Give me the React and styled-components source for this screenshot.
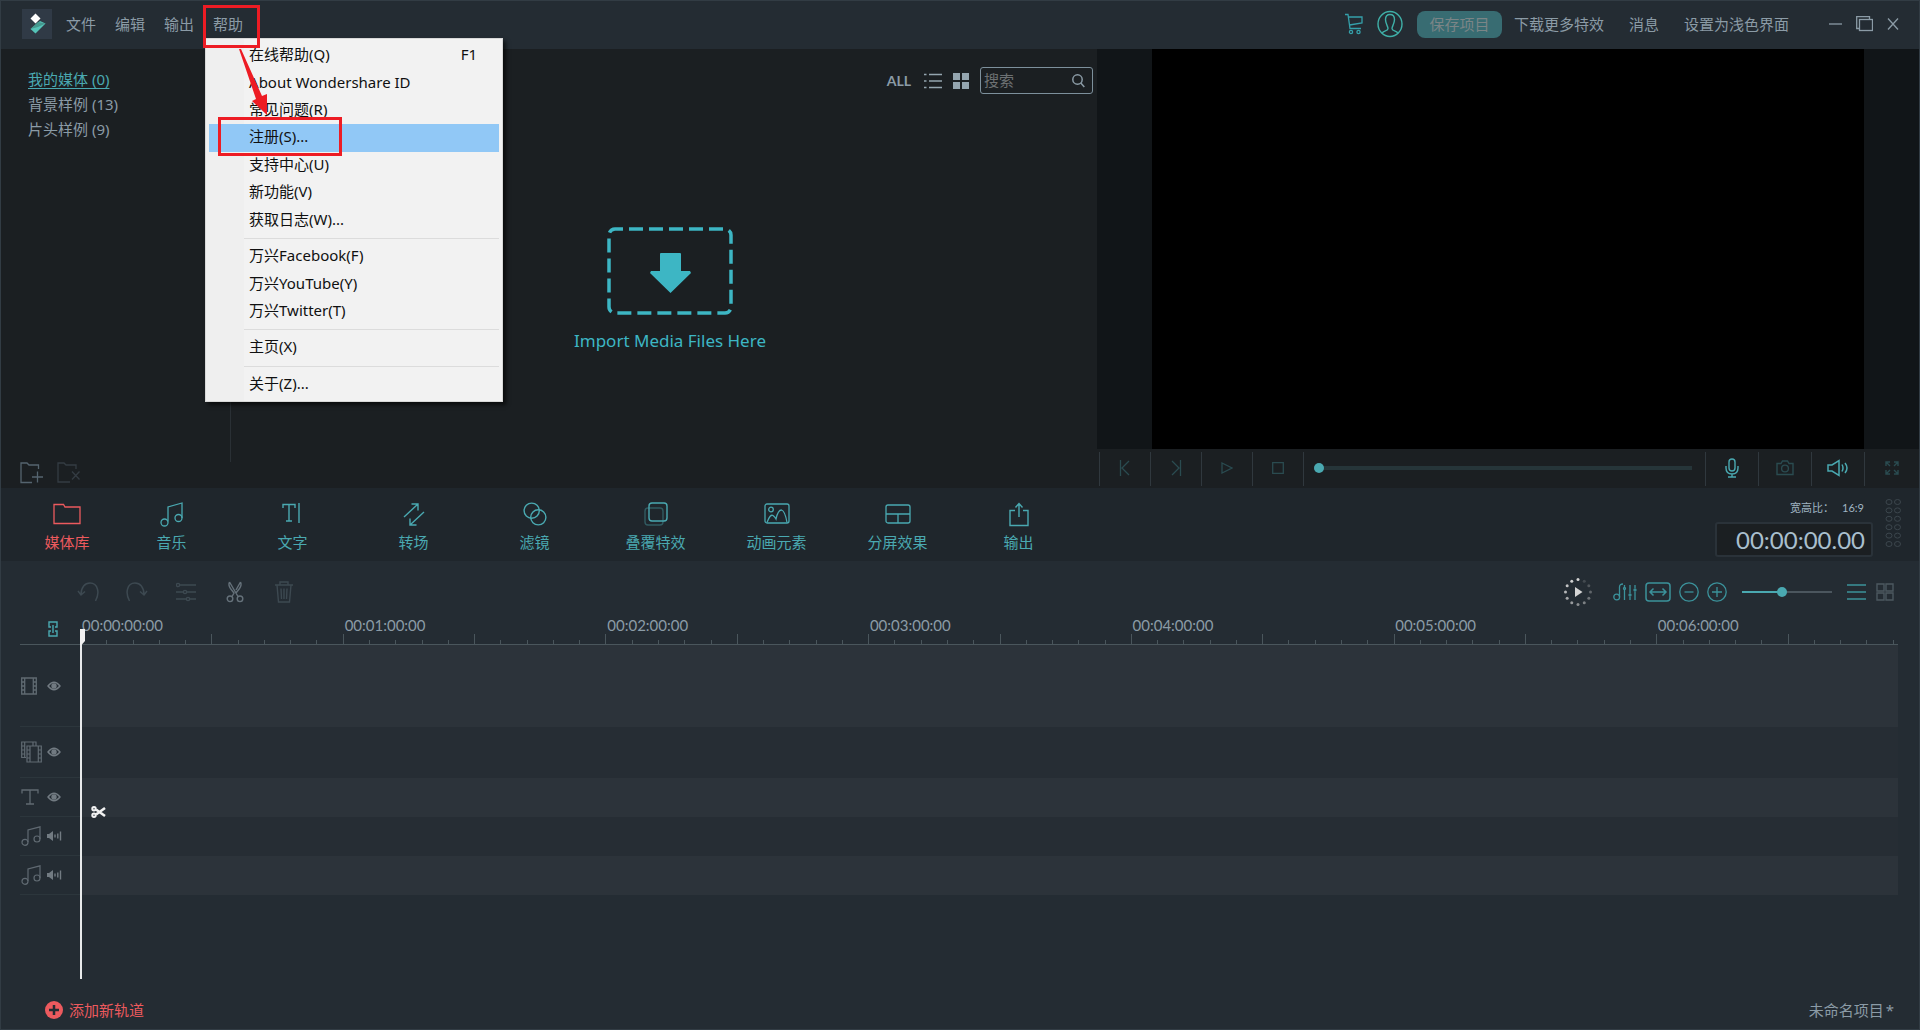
import React from "react";
import styled, { createGlobalStyle, css } from "styled-components";

const color = {
  bar: "#242c33",
  nav: "#1f262c",
  panel: "#1b1f22",
  stage: "#111518",
  line: "#30383e",
  text: "#8b9ba6",
  teal: "#4aa9b1",
  dimTeal: "#2a4b50",
  red: "#ec5a5e",
  mark: "#ed1c24",
};

const uiFont = `"Noto Sans", "Noto Sans CJK SC", sans-serif`;
const numberFont = `Lato, "Noto Sans CJK SC", sans-serif`;

const GlobalStyle = createGlobalStyle`
  *, *::before, *::after { box-sizing: border-box; }
  body { margin: 0; background: ${color.bar}; font: 15px/20px ${uiFont}; color: ${color.text}; }
  button, input { font: inherit; color: inherit; }
  button { border: 0; padding: 0; background: none; white-space: nowrap; }
  ul { margin: 0; padding: 0; list-style: none; }
  a { color: inherit; text-decoration: none; }
  svg { display: block; flex: none; }
`;

const Window = styled.div`
  min-height: 100vh;
  display: flex;
  flex-direction: column;
  border: 1px solid #323c44;
  background: ${color.bar};
`;

const Glyph = styled.svg`
  fill: none;
  stroke: currentColor;
  stroke-width: ${(p) => p.$weight || 1};
`;

function Icon({ w, h, weight, children }) {
  return (
    <Glyph width={w} height={h} viewBox={`0 0 ${w} ${h}`} $weight={weight} aria-hidden="true">
      {children}
    </Glyph>
  );
}

/* ---------- title bar ---------- */

const TitleBar = styled.header`
  display: flex;
  align-items: center;
  height: 48px;
  padding: 0 20px 2px 21px;
  background: ${color.bar};
`;

const MenuBar = styled.nav`
  display: flex;
  align-self: stretch;
  gap: 19px;
  margin-left: 14px;
`;

const MenuSlot = styled.div`
  position: relative;
  display: flex;
  align-items: center;
`;

const Dropdown = styled.ul`
  position: absolute;
  z-index: 2;
  top: 37px;
  left: -8px;
  width: 298px;
  height: 364px;
  padding: 3px;
  display: flex;
  flex-direction: column;
  border: 1px solid #d8d8d8;
  background: linear-gradient(to right, #efefef 38px, #f2f2f2 38px);
  box-shadow: 3px 3px 4px rgba(0, 0, 0, 0.6);
  color: #101010;
`;

const DropdownRow = styled.li`
  position: relative;
  flex: 1;
  display: flex;
  background: ${(p) => (p.$active ? "#91c8f6" : "transparent")};
`;

const DropdownButton = styled.button`
  flex: 1;
  display: flex;
  align-items: center;
  justify-content: space-between;
  padding: 0 22px 3px 40px;
`;

const DropdownRule = styled.li`
  height: 9px;
  padding: 4px 0;
  margin-left: 35px;
  background: #dcdcdc content-box;
`;

const MarkBox = styled.span`
  position: absolute;
  z-index: 3;
  top: ${(p) => p.$top}px;
  left: ${(p) => p.$left}px;
  width: ${(p) => p.$width}px;
  height: ${(p) => p.$height}px;
  border: 3px solid ${color.mark};
  pointer-events: none;
`;

const MarkArrow = styled.svg`
  position: absolute;
  z-index: 3;
  top: 47px;
  left: 25px;
`;

const TitleTools = styled.div`
  display: flex;
  align-items: center;
  gap: ${(p) => p.$gap}px;
  margin-left: ${(p) => p.$lead || "0"};
`;

const IconButton = styled.button`
  display: flex;
  align-items: center;
  justify-content: center;
  color: ${(p) => p.$color || color.text};
`;

const SaveButton = styled.button`
  width: 85px;
  height: 27px;
  border-radius: 8px;
  background: #386c72;
  color: #7b8587;
`;

const menuGroups = [
  ["在线帮助(Q)", "About Wondershare ID", "常见问题(R)", "注册(S)...", "支持中心(U)", "新功能(V)", "获取日志(W)..."],
  ["万兴Facebook(F)", "万兴YouTube(Y)", "万兴Twitter(T)"],
  ["主页(X)"],
  ["关于(Z)..."],
];

function HelpMenu() {
  return (
    <MenuSlot>
      <button>帮助</button>
      <Dropdown>
        {menuGroups.map((group, g) => (
          <React.Fragment key={g}>
            {g > 0 && <DropdownRule />}
            {group.map((label) => (
              <DropdownRow key={label} $active={label.startsWith("注册")}>
                <DropdownButton>
                  <span>{label}</span>
                  {label.startsWith("在线") && <span>F1</span>}
                </DropdownButton>
                {label.startsWith("注册") && <MarkBox $top={-7} $left={9} $width={124} $height={39} />}
              </DropdownRow>
            ))}
          </React.Fragment>
        ))}
      </Dropdown>
      <MarkBox $top={4} $left={-10} $width={57} $height={43} />
      <MarkArrow width="34" height="70" viewBox="0 0 34 70" aria-hidden="true">
        <path d="M1 1 L3 1 L24 48 L29 46 L29 67 L14 53 L18 51 Z" fill={color.mark} />
      </MarkArrow>
    </MenuSlot>
  );
}

function Header() {
  return (
    <TitleBar>
      <svg width="30" height="30" viewBox="0 0 30 30" aria-hidden="true">
        <rect width="30" height="30" fill="#303a46" />
        <path d="M13.500 4.500 L18.500 9.500 L13.500 14.500 L8.500 9.500 Z" fill="#fff" />
        <path d="M18 12 L23.500 14.500 L13.500 24.500 L8.500 20 Z" fill="#55c3b8" />
        <path d="M8.500 20 L16 13 L23.500 14.500 L16 18 Z" fill="#45988f" />
      </svg>
      <MenuBar>
        {["文件", "编辑", "输出"].map((m) => (
          <MenuSlot key={m}>
            <button>{m}</button>
          </MenuSlot>
        ))}
        <HelpMenu />
      </MenuBar>
      <TitleTools $gap={14} $lead="auto">
        <IconButton aria-label="购物车" $color="#35a0aa">
          <Icon w={18} h={22} weight={1.3}>
            <path d="M0 1.500H3L5 15.500H16M3.500 4H17V10L4.500 12" />
            <circle cx="6" cy="19" r="1.600" />
            <circle cx="13.500" cy="19" r="1.600" />
          </Icon>
        </IconButton>
        <IconButton aria-label="账户" $color="#3fb0a8">
          <Icon w={26} h={28} weight={1.4}>
            <ellipse cx="13" cy="14" rx="12" ry="12.500" />
            <path d="M5 23.500C6 20 11 21.500 11 18.500C11 16 8.500 14 8.500 9.500C8.500 6 10.500 4.500 13 4.500S17.500 6 17.500 9.500C17.500 14 15 16 15 18.500C15 21.500 20 20 21 23.500" />
          </Icon>
        </IconButton>
        <SaveButton>保存项目</SaveButton>
      </TitleTools>
      <TitleTools $gap={25} $lead="12px">
        <a href="#effects">下载更多特效</a>
        <a href="#messages">消息</a>
        <button>设置为浅色界面</button>
      </TitleTools>
      <TitleTools $gap={14} $lead="40px">
        <IconButton aria-label="最小化">
          <Icon w={13} h={16} weight={1.3}><path d="M0 8H13" /></Icon>
        </IconButton>
        <IconButton aria-label="还原">
          <Icon w={17} h={16} weight={1.3}>
            <rect x="3.500" y="3.500" width="13" height="11" />
            <path d="M3.500 12.500H.7V.7H13.500V3.500" />
          </Icon>
        </IconButton>
        <IconButton aria-label="关闭">
          <Icon w={12} h={14} weight={1.3}><path d="M1 1.500L11 12.500M11 1.500L1 12.500" /></Icon>
        </IconButton>
      </TitleTools>
    </TitleBar>
  );
}

/* ---------- media panel ---------- */

const Workspace = styled.main`
  display: grid;
  grid-template-columns: minmax(0, 4fr) minmax(0, 3fr);
  height: 439px;
`;

const MediaPanel = styled.section`
  display: flex;
  flex-direction: column;
  background: ${color.panel};
`;

const MediaBody = styled.div`
  flex: 1;
  display: flex;
`;

const Library = styled.ul`
  width: 230px;
  padding: 18px 0 0 27px;
  border-right: 1px solid #2a3035;
`;

const LibraryLink = styled.a`
  line-height: 25px;
  ${(p) =>
    p.$active &&
    css`
      color: ${color.teal};
      text-decoration: underline;
      text-underline-offset: 3px;
    `}
`;

const LibraryActions = styled.div`
  display: flex;
  align-items: flex-start;
  gap: 14px;
  height: 26px;
  padding-left: 19px;
`;

const Browser = styled.div`
  flex: 1;
  display: flex;
  flex-direction: column;
`;

const BrowserBar = styled.div`
  display: flex;
  align-items: center;
  justify-content: flex-end;
  gap: 11px;
  padding: 18px 4px 0 0;
`;

const FilterButton = styled.button`
  padding-right: 2px;
  font: 700 14px/20px ${numberFont};
`;

const SearchBox = styled.label`
  display: flex;
  align-items: center;
  width: 113px;
  height: 27px;
  padding: 0 7px 0 3px;
  border: 1px solid #7d909c;
  border-radius: 3px;
`;

const SearchInput = styled.input`
  flex: 1;
  min-width: 0;
  padding: 0 0 2px;
  border: 0;
  outline: 0;
  background: none;
  &::placeholder { color: #6d7173; opacity: 1; }
`;

const DropZone = styled.button`
  flex: 1;
  display: flex;
  flex-direction: column;
  align-items: center;
  gap: 14px;
  padding: 133px 0 0 12px;
  font-size: 17px;
  line-height: 24px;
  color: #3db6c4;
`;

function Media() {
  return (
    <MediaPanel>
      <MediaBody>
        <Library>
          <li><LibraryLink href="#mine" $active>我的媒体 (0)</LibraryLink></li>
          <li><LibraryLink href="#backgrounds">背景样例 (13)</LibraryLink></li>
          <li><LibraryLink href="#intros">片头样例 (9)</LibraryLink></li>
        </Library>
        <Browser>
          <BrowserBar>
            <FilterButton>ALL</FilterButton>
            <IconButton aria-label="列表视图" $color="#94a5af">
              <Icon w={18} h={16} weight={1.300}>
                <path d="M0 1.500H2.500M5 1.500H18M0 8H2.500M5 8H18M0 14.500H2.500M5 14.500H18" />
              </Icon>
            </IconButton>
            <IconButton aria-label="网格视图" $color="#94a5af">
              <Icon w={16} h={16}>
                <path d="M0 0H7V7H0ZM9 0H16V7H9ZM0 9H7V16H0ZM9 9H16V16H9Z" fill="currentColor" stroke="none" />
              </Icon>
            </IconButton>
            <SearchBox>
              <SearchInput type="text" placeholder="搜索" aria-label="搜索" />
              <Icon w={13} h={14} weight={1.500}>
                <circle cx="5.500" cy="5.500" r="4.700" />
                <path d="M8.800 9L12.300 13" />
              </Icon>
            </SearchBox>
          </BrowserBar>
          <DropZone>
            <Icon w={126} h={88} weight={3.500}>
              <path
                d="M8 2H118A6 6 0 0 1 124 8V80A6 6 0 0 1 118 86H8A6 6 0 0 1 2 80V8A6 6 0 0 1 8 2"
                strokeDasharray="14 6"
                strokeDashoffset="6"
              />
              <path d="M54 26H73Q74 26 74 27V44H83L84 46L63.500 66L43 46L44 44H53V27Q53 26 54 26Z" fill="currentColor" stroke="none" />
            </Icon>
            <span>Import Media Files Here</span>
          </DropZone>
        </Browser>
      </MediaBody>
      <LibraryActions>
        <IconButton aria-label="新建文件夹" $color="#55646f">
          <Icon w={23} h={22} weight={1.300}>
            <path d="M12 20.500H1V1H7L9 3H18.500V7M12 15H23M17.500 9.500V20.500" />
          </Icon>
        </IconButton>
        <IconButton aria-label="删除文件夹" $color="#343c43">
          <Icon w={23} h={22} weight={1.300}>
            <path d="M13 20H1V1H7L9 3H19V7M15 9.500L22.500 17.500M22.500 9.500L15 17.500" />
          </Icon>
        </IconButton>
      </LibraryActions>
    </MediaPanel>
  );
}

/* ---------- preview ---------- */

const PreviewPanel = styled.section`
  display: flex;
  flex-direction: column;
  background: ${color.panel};
`;

const Stage = styled.div`
  flex: 1;
  display: flex;
  padding: 0 55px;
  background: ${color.stage};
`;

const Video = styled.div`
  flex: 1;
  background: #000;
`;

const Transport = styled.div`
  display: flex;
  height: 39px;
  padding: 3px 0 2px 2px;
`;

const TransportButton = styled.button`
  display: flex;
  align-items: center;
  justify-content: center;
  width: ${(p) => p.$width}px;
  padding-bottom: 3px;
  border-left: 1px solid ${color.line};
  color: ${(p) => (p.$on ? color.teal : color.dimTeal)};
`;

const Seek = styled.div`
  flex: 1;
  display: flex;
  align-items: center;
  padding: 0 13px 3px 10px;
  border-left: 1px solid ${color.line};
`;

const Range = styled.input`
  appearance: none;
  width: ${(p) => p.$width};
  height: 12px;
  margin: 0;
  background: none;
  &::-webkit-slider-runnable-track {
    height: ${(p) => p.$track}px;
    background: ${(p) => p.$fill};
  }
  &::-webkit-slider-thumb {
    appearance: none;
    width: 10px;
    height: 10px;
    margin-top: ${(p) => (p.$track - 10) / 2}px;
    border-radius: 50%;
    background: ${color.teal};
  }
`;

function Preview() {
  return (
    <PreviewPanel>
      <Stage><Video /></Stage>
      <Transport>
        <TransportButton $width={51} aria-label="上一帧">
          <Icon w={12} h={16} weight={1.300}><path d="M1.500 0V16M10 1L3 8L10 15" /></Icon>
        </TransportButton>
        <TransportButton $width={51} aria-label="下一帧">
          <Icon w={12} h={16} weight={1.300}><path d="M10.500 0V16M2 1L9 8L2 15" /></Icon>
        </TransportButton>
        <TransportButton $width={51} aria-label="播放">
          <Icon w={12} h={12} weight={1.300}><path d="M1 1L11 6L1 11Z" /></Icon>
        </TransportButton>
        <TransportButton $width={51} aria-label="停止">
          <Icon w={12} h={12} weight={1.300}><path d="M.7.700H11.300V11.300H.7Z" /></Icon>
        </TransportButton>
        <Seek>
          <Range type="range" min="0" max="100" defaultValue="0" aria-label="播放进度" $width="100%" $track={4} $fill="#263539" />
        </Seek>
        <TransportButton $width={53} $on aria-label="录音">
          <Icon w={14} h={20} weight={1.400}>
            <rect x="4" y="1" width="6" height="12" rx="3" />
            <path d="M1 8V10Q1 16 7 16T13 10V8M7 16V19M3 19H11" />
          </Icon>
        </TransportButton>
        <TransportButton $width={53} aria-label="截图">
          <Icon w={18} h={16} weight={1.400}>
            <path d="M1 3.500H5L6.500 1H11.500L13 3.500H17V14.500H1Z" />
            <circle cx="9" cy="8.500" r="3.400" />
          </Icon>
        </TransportButton>
        <TransportButton $width={53} $on aria-label="音量">
          <Icon w={22} h={18} weight={1.500}>
            <path d="M1 6H5L12 1.500V16.500L5 12H1ZM15 5.500Q17 9 15 12.500M18 4Q22 9 18 14" />
          </Icon>
        </TransportButton>
        <TransportButton $width={55} aria-label="全屏">
          <Icon w={14} h={14} weight={1.400}>
            <path d="M1 5V1H5M1 1L5 5M9 1H13V5M13 1L9 5M1 9V13H5M1 13L5 9M13 9V13H9M13 13L9 9" />
          </Icon>
        </TransportButton>
      </Transport>
    </PreviewPanel>
  );
}

/* ---------- section navigation ---------- */

const SectionBar = styled.div`
  display: flex;
  justify-content: space-between;
  height: 73px;
  padding: 0 18px 0 22px;
  background: ${color.nav};
`;

const SectionNav = styled.nav`
  display: flex;
`;

const SectionButton = styled.button`
  display: flex;
  flex-direction: column;
  align-items: center;
  gap: 4px;
  width: ${(p) => (p.$active ? 88 : 121)}px;
  padding-top: 14px;
  color: ${(p) => (p.$active ? color.red : color.teal)};
`;

const ProjectInfo = styled.div`
  display: flex;
  align-items: flex-start;
  gap: 12px;
  padding-top: 10px;
`;

const Clock = styled.div`
  display: flex;
  flex-direction: column;
  gap: 4px;
  width: 158px;
`;

const Ratio = styled.div`
  display: flex;
  justify-content: flex-end;
  gap: 8px;
  padding-right: 9px;
  color: #9fb4c2;
  font: 11px/20px ${numberFont};
`;

const Timecode = styled.output`
  padding: 0 6px;
  border: 2px solid #2a3239;
  border-radius: 3px;
  background: ${color.panel};
  color: #a9bfce;
  font: 24px/31px ${numberFont};
  text-align: right;
`;

const sections = [
  { label: "媒体库", icon: <Icon w={28} h={24} weight={1.300}><path d="M1 2.500H10.500L12 5H27V21.500H1Z" /></Icon> },
  {
    label: "音乐",
    icon: (
      <Icon w={24} h={26} weight={1.300}>
        <path d="M8 19.500V5L22 1V16" />
        <circle cx="4.500" cy="20.500" r="3.500" />
        <circle cx="18.500" cy="16" r="3.500" />
      </Icon>
    ),
  },
  { label: "文字", icon: <Icon w={22} h={24} weight={1.400}><path d="M1 6V2.500H13V6M7 2.500V19M4 19H10M17 1V21" /></Icon> },
  { label: "转场", icon: <Icon w={22} h={24} weight={1.400}><path d="M1 15L15 2M8.500 2H15V8.500M21 10L7 23M13.500 23H7V16.500" /></Icon> },
  {
    label: "滤镜",
    icon: (
      <Icon w={24} h={24} weight={1.400}>
        <circle cx="8.700" cy="8.700" r="7.600" />
        <circle cx="15.300" cy="15.300" r="7.600" />
      </Icon>
    ),
  },
  {
    label: "叠覆特效",
    icon: (
      <Icon w={24} h={24} weight={1.400}>
        <rect x="1" y="6" width="18" height="17" rx="3" opacity=".4" />
        <rect x="5" y="1" width="18" height="18" rx="3" />
      </Icon>
    ),
  },
  {
    label: "动画元素",
    icon: (
      <Icon w={26} h={24} weight={1.300}>
        <rect x="1" y="2" width="24" height="19" rx="2" />
        <circle cx="7" cy="7.500" r="2.300" />
        <path d="M3 20.500Q6 12 9 13.500Q11 15 12 17Q14 8 17.500 8Q21 9 23 20.500" />
      </Icon>
    ),
  },
  { label: "分屏效果", icon: <Icon w={26} h={24} weight={1.300}><rect x="1" y="3" width="24" height="18" rx="2" /><path d="M1 12H25M13 12V21" /></Icon> },
  { label: "输出", icon: <Icon w={20} h={25} weight={1.400}><path d="M6 8.500H1V23.500H19V8.500H14M10 15V1.500M6.500 5.500L10 1.500L13.500 5.500" /></Icon> },
];

const IconSlot = styled.span`
  height: 26px;
  display: flex;
  align-items: flex-start;
`;

function Sections() {
  return (
    <SectionBar>
      <SectionNav>
        {sections.map((s, i) => (
          <SectionButton key={s.label} $active={i === 0}>
            <IconSlot>{s.icon}</IconSlot>
            {s.label}
          </SectionButton>
        ))}
      </SectionNav>
      <ProjectInfo>
        <Clock>
          <Ratio><span>宽高比：</span><span>16:9</span></Ratio>
          <Timecode>00:00:00.00</Timecode>
        </Clock>
        <Glyph width="16" height="50" viewBox="0 0 16 50" $weight={1} color="#3c464d" aria-hidden="true">
          {[0, 1, 2, 3, 4, 5].map((r) => (
            <React.Fragment key={r}>
              <ellipse cx="4" cy={4 + r * 8.4} rx="3" ry="2.500" />
              <ellipse cx="12.500" cy={4 + r * 8.4} rx="3" ry="2.500" />
            </React.Fragment>
          ))}
        </Glyph>
      </ProjectInfo>
    </SectionBar>
  );
}

/* ---------- timeline ---------- */

const TimelineBar = styled.div`
  display: flex;
  align-items: center;
  justify-content: space-between;
  height: 52px;
  padding: 10px 25px 0 62px;
`;

const EditTools = styled.div`
  display: flex;
  button { width: 49px; }
`;

const ToolGroup = styled.div`
  display: flex;
  align-items: center;
  gap: ${(p) => p.$gap}px;
`;

const Canvas = styled.section`
  position: relative;
  flex: 1;
  padding: 0 21px 0 19px;
`;

const TimelineRow = styled.div`
  display: grid;
  grid-template-columns: 60px minmax(0, 1fr);
`;

const RulerRow = styled(TimelineRow)`
  height: 32px;
  border-bottom: 1px solid #4a565c;
`;

const LinkCell = styled.div`
  display: flex;
  align-items: flex-start;
  padding: 8px 0 0 28px;
`;

const Ruler = styled.div`
  padding-top: 4px;
  overflow: hidden;
`;

const RulerLabels = styled.div`
  display: grid;
  grid-template-columns: repeat(6, 525fr) 484fr;
  font: 15px/17px ${numberFont};
  span { padding-left: 2px; }
`;

const RulerTicks = styled.div`
  display: grid;
  grid-template-columns: repeat(69, 5fr) 1fr;
  align-items: end;
  height: 10px;
`;

const Tick = styled.i`
  height: ${(p) => (p.$major ? 10 : 4)}px;
  border-left: 1px solid #4a565c;
`;

const TrackHead = styled.div`
  display: flex;
  align-items: center;
  height: ${(p) => p.$height}px;
  border-bottom: 1px solid #2c363c;
  color: #606a72;
`;

const TrackIcon = styled.span`
  display: flex;
  width: 27px;
  padding-left: 1px;
`;

const Lane = styled.div`
  background: ${(p) => (p.$light ? "#2c333a" : "#262d34")};
`;

const Playhead = styled.div`
  position: absolute;
  top: 16px;
  bottom: 12px;
  left: 79px;
  width: 2px;
  background: #e8eaeb;
  &::before {
    content: "";
    position: absolute;
    top: 0;
    left: 0;
    width: 5px;
    height: 16px;
    background: #f0f0f0;
    clip-path: polygon(0 0, 100% 0, 100% 75%, 30% 100%, 0 100%);
  }
`;

const CutHandle = styled.button`
  position: absolute;
  top: 193px;
  left: 90px;
  color: #f2f2f2;
`;

const Footer = styled.footer`
  display: flex;
  align-items: center;
  justify-content: space-between;
  height: 38px;
  padding: 0 25px 0 44px;
`;

const AddTrack = styled.button`
  display: flex;
  align-items: center;
  gap: 6px;
  color: ${color.red};
`;

const ProjectName = styled.span`
  display: flex;
  gap: 2px;
`;

const Film = () => (
  <Icon w={16} h={18} weight={1.300}>
    <path d="M.7 1H15.300V17H.7ZM3.700 1V17M12.300 1V17M.7 5H3.700M.7 9H3.700M.7 13H3.700M12.300 5H15.300M12.300 9H15.300M12.300 13H15.300" />
  </Icon>
);
const Films = () => (
  <Icon w={21} h={22} weight={1.200}>
    <path d="M5 16.500H.7V1H15V5M3.700 1V16.500M.7 5H3.700M.7 9H3.700M.7 13H3.700M12 1V5M6 5H20.300V21H6ZM9 5V21M17.300 5V21M6 9H9M6 13H9M6 17H9M17.300 9H20.300M17.300 13H20.300M17.300 17H20.300" />
  </Icon>
);
const Letter = () => (
  <Icon w={18} h={16} weight={1.300}><path d="M1 4.500V1H17V4.500M9 1V15M5 15H13" /></Icon>
);
const Note = () => (
  <Icon w={20} h={20} weight={1.200}>
    <path d="M7 16V4L19 .800V13" />
    <circle cx="4" cy="16.300" r="3" />
    <circle cx="16" cy="13" r="3" />
  </Icon>
);
const Eye = () => (
  <Icon w={14} h={10} weight={1.400}>
    <path d="M1 5Q7-2.500 13 5Q7 12.500 1 5Z" />
    <circle cx="7" cy="5" r="2" fill="currentColor" />
  </Icon>
);
const Sound = () => (
  <Icon w={15} h={10} weight={1.400}>
    <path d="M0 3H2L6 0V10L2 7H0Z" fill="currentColor" stroke="none" />
    <path d="M8 3.500V6.500M10.800 2.500V7.500M13.500 .500V9.500" />
  </Icon>
);

const tracks = [
  { height: 82, Art: Film, Toggle: Eye, name: "视频轨道" },
  { height: 51, Art: Films, Toggle: Eye, name: "画中画轨道" },
  { height: 39, Art: Letter, Toggle: Eye, name: "文字轨道" },
  { height: 39, Art: Note, Toggle: Sound, name: "音乐轨道" },
  { height: 39, Art: Note, Toggle: Sound, name: "音效轨道" },
];

function TimelineTools() {
  return (
    <TimelineBar>
      <EditTools>
        <IconButton aria-label="撤销" $color="#3d4951">
          <Icon w={22} h={22} weight={1.500}><path d="M1 10L4 14L8 10.500M4 14C4 6 8 2 13 2C21 2 23 12 18.500 20" /></Icon>
        </IconButton>
        <IconButton aria-label="重做" $color="#3d4951">
          <Icon w={22} h={22} weight={1.500}><path d="M21 10L18 14L14 10.500M18 14C18 6 14 2 9 2C1 2-1 12 3.500 20" /></Icon>
        </IconButton>
        <IconButton aria-label="调节" $color="#3d4951">
          <Icon w={20} h={20} weight={1.400}>
            <path d="M4 3H20M0 10H7M11 10H20M0 17H10M14 17H20" />
            <circle cx="2" cy="3" r="1.600" /><circle cx="9" cy="10" r="1.600" /><circle cx="12" cy="17" r="1.600" />
          </Icon>
        </IconButton>
        <IconButton aria-label="剪切" $color="#65717a">
          <Icon w={18} h={22} weight={1.400}>
            <path d="M3.500 1L12 15.500M3.500 1Q2 4 4.500 7.500L8 12L6 15.500M14.500 1L10 9M14.500 1Q16 4 13.500 7.500L10 12" />
            <circle cx="4" cy="17.800" r="2.800" /><circle cx="14" cy="17.800" r="2.800" />
          </Icon>
        </IconButton>
        <IconButton aria-label="删除" $color="#3d4951">
          <Icon w={20} h={22} weight={1.400}>
            <path d="M1 4H19M6 4V1H14V4M3 4L4.500 21H15.500L17 4M7 7.500L7.500 18M10 7.500V18M13 7.500L12.500 18" />
          </Icon>
        </IconButton>
      </EditTools>
      <ToolGroup $gap={15}>
        <IconButton aria-label="渲染预览" $color="#d5d5d5">
          <Icon w={34} h={28}>
            <path d="M11 9L18.500 14L11 19Z" fill="currentColor" stroke="none" />
            {Array.from({ length: 12 }, (_, i) => (
              <circle
                key={i}
                cx={14 + 12.500 * Math.sin((i * Math.PI) / 6)}
                cy={14 - 12.500 * Math.cos((i * Math.PI) / 6)}
                r="1.500"
                fill="currentColor"
                stroke="none"
                opacity={i === 0 ? 1 : 0.1 + i * 0.08}
              />
            ))}
          </Icon>
        </IconButton>
        <ToolGroup $gap={8}>
          <IconButton aria-label="混音器" $color="#3b929b">
            <Icon w={24} h={18} weight={1.300}>
              <path d="M6.500 14V4Q6.500 1 10 1M11.500 2V4M11.500 7V17M17 2V10M17 14V17M22 2V5M22 9V17" />
              <circle cx="3.700" cy="14" r="2.900" />
              <circle cx="11.500" cy="5.500" r="1" /><circle cx="17" cy="12" r="1" /><circle cx="22" cy="7" r="1" />
            </Icon>
          </IconButton>
          <IconButton aria-label="适合窗口" $color="#3b929b">
            <Icon w={26} h={20} weight={1.500}>
              <rect x="1" y="1" width="24" height="18" rx="3" />
              <path d="M5 10H21M8.500 6.500L5 10L8.500 13.500M17.500 6.500L21 10L17.500 13.500" />
            </Icon>
          </IconButton>
          <IconButton aria-label="缩小" $color="#3b929b">
            <Icon w={20} h={20} weight={1.300}><circle cx="10" cy="10" r="9.200" /><path d="M5.500 10H14.500" /></Icon>
          </IconButton>
          <IconButton aria-label="放大" $color="#3b929b">
            <Icon w={20} h={20} weight={1.300}><circle cx="10" cy="10" r="9.200" /><path d="M5 10H15M10 5V15" /></Icon>
          </IconButton>
        </ToolGroup>
        <Range
          type="range"
          min="0"
          max="100"
          defaultValue="44"
          aria-label="时间线缩放"
          $width="90px"
          $track={2}
          $fill={`linear-gradient(to right, ${color.teal} 45%, #4b565e 45%)`}
        />
        <ToolGroup $gap={10}>
          <IconButton aria-label="轨道列表" $color="#3b929b">
            <Icon w={19} h={16} weight={1.400}><path d="M0 1H19M0 8H19M0 15H19" /></Icon>
          </IconButton>
          <IconButton aria-label="故事板" $color="#4c5860">
            <Icon w={18} h={18} weight={1.400}>
              <path d="M1 1H8V8H1ZM10 1H17V8H10ZM1 10H8V17H1ZM10 10H17V17H10Z" />
            </Icon>
          </IconButton>
        </ToolGroup>
      </ToolGroup>
    </TimelineBar>
  );
}

function Timeline() {
  return (
    <>
      <TimelineTools />
      <Canvas>
        <RulerRow>
          <LinkCell>
            <IconButton aria-label="链接轨道" $color={color.teal}>
              <Icon w={10} h={16} weight={1.400}>
                <path d="M3 6H1V1H9V6H7M3 10H1V15H9V10H7M5 4V12" />
              </Icon>
            </IconButton>
          </LinkCell>
          <Ruler>
            <RulerLabels>
              {[0, 1, 2, 3, 4, 5, 6].map((m) => (
                <span key={m}>{`00:0${m}:00:00`}</span>
              ))}
            </RulerLabels>
            <RulerTicks>
              {Array.from({ length: 70 }, (_, i) => (
                <Tick key={i} $major={i % 5 === 0} />
              ))}
            </RulerTicks>
          </Ruler>
        </RulerRow>
        {tracks.map(({ height, Art, Toggle, name }, i) => (
          <TimelineRow key={name}>
            <TrackHead $height={height}>
              <TrackIcon><Art /></TrackIcon>
              <IconButton aria-label={name} $color="#727b82"><Toggle /></IconButton>
            </TrackHead>
            <Lane $light={i % 2 === 0} />
          </TimelineRow>
        ))}
        <Playhead />
        <CutHandle aria-label="在播放头处分割">
          <Icon w={15} h={12} weight={2}>
            <path d="M5 3.500L14 10M5 8.500L14 2" strokeWidth="2.600" />
            <circle cx="3" cy="2.700" r="1.700" /><circle cx="3" cy="9.300" r="1.700" />
          </Icon>
        </CutHandle>
      </Canvas>
      <Footer>
        <AddTrack>
          <Icon w={18} h={18} weight={2.500}>
            <circle cx="9" cy="9" r="9" fill="currentColor" stroke="none" />
            <path d="M4 9H14M9 4V14" stroke={color.bar} />
          </Icon>
          添加新轨道
        </AddTrack>
        <ProjectName><span>未命名项目</span><span>*</span></ProjectName>
      </Footer>
    </>
  );
}

export default function App() {
  return (
    <>
      <GlobalStyle />
      <Window>
        <Header />
        <Workspace>
          <Media />
          <Preview />
        </Workspace>
        <Sections />
        <Timeline />
      </Window>
    </>
  );
}
